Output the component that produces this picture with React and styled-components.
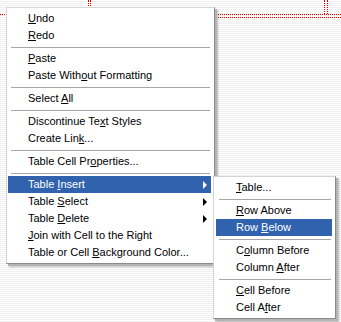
import React from 'react'
import styled, { createGlobalStyle } from 'styled-components'

const GlobalStyle = createGlobalStyle`
  html, body {
    margin: 0;
    padding: 0;
    background: #fff;
  }
`;

const mainItems = [
  { label: 'Undo', key: 0 },
  { label: 'Redo', key: 0 },
  { sep: true },
  { label: 'Paste', key: 0 },
  { label: 'Paste Without Formatting', key: 10 },
  { sep: true },
  { label: 'Select All', key: 7 },
  { sep: true },
  { label: 'Discontinue Text Styles', key: 14 },
  { label: 'Create Link...', key: 10 },
  { sep: true },
  { label: 'Table Cell Properties...', key: 13 },
  { sep: true },
  { label: 'Table Insert', key: 6, sub: true, active: true },
  { label: 'Table Select', key: 6, sub: true },
  { label: 'Table Delete', key: 6, sub: true },
  { label: 'Join with Cell to the Right', key: 0 },
  { label: 'Table or Cell Background Color...', key: 14 },
];

const subItems = [
  { label: 'Table...', key: 0 },
  { sep: true },
  { label: 'Row Above', key: 0 },
  { label: 'Row Below', key: 4, active: true },
  { sep: true },
  { label: 'Column Before', key: 1 },
  { label: 'Column After', key: 7 },
  { sep: true },
  { label: 'Cell Before', key: 0 },
  { label: 'Cell After', key: 6 },
];

function Label({ text, at }) {
  return (
    <Text>
      {text.slice(0, at)}
      <Key>{text[at]}</Key>
      {text.slice(at + 1)}
    </Text>
  )
}

function MenuList({ items, x, y, w, inset }) {
  return (
    <Menu $x={x} $y={y} $w={w} $inset={inset}>
      {items.map((it, i) =>
        it.sep ? (
          <Separator key={i} />
        ) : (
          <Item key={i} $active={it.active}>
            <Label text={it.label} at={it.key} />
            {it.sub && <Arrow $active={it.active} />}
          </Item>
        )
      )}
    </Menu>
  )
}

export default function App() {
  return (
    <>
      <GlobalStyle />
      <Canvas>
        <DotLine $top={14} $left={0} $width={341} />
        <DotLine $top={17} $left={216} $width={125} />
        <DotCol $left={88} $height={14} />
        <DotCol $left={90} $height={14} />
        <DotCol $left={324} $height={14} />
        <DotCol $left={327} $height={14} />
        <MenuList items={mainItems} x={6} y={7} w={209} inset={1} />
        <MenuList items={subItems} x={213} y={176} w={123} inset={2} />
      </Canvas>
    </>
  )
}

const Canvas = styled.div`
  position: relative;
  width: 341px;
  height: 322px;
  overflow: hidden;
  background: repeating-linear-gradient(
    to bottom,
    #ffffff 0px,
    #ffffff 1px,
    #efefef 1px,
    #efefef 2px
  );
  font-family: "Liberation Sans", Arial, sans-serif;
  font-size: 11px;
  color: #000;
`;

const DotLine = styled.div`
  position: absolute;
  top: ${p => p.$top}px;
  left: ${p => p.$left}px;
  width: ${p => p.$width}px;
  border-top: 1px dotted #e00000;
`;

const DotCol = styled.div`
  position: absolute;
  top: 0;
  left: ${p => p.$left}px;
  height: ${p => p.$height}px;
  border-left: 1px dotted #e00000;
`;

const Menu = styled.div`
  position: absolute;
  left: ${p => p.$x}px;
  top: ${p => p.$y}px;
  width: ${p => p.$w}px;
  box-sizing: border-box;
  display: flex;
  flex-direction: column;
  padding: 2px 3px 2px ${p => p.$inset}px;
  background: #fff;
  border: 1px solid;
  border-color: #d4d4d4 #8a8a8a #8a8a8a #d4d4d4;
  box-shadow: 2px 2px 0 #b4b4b4, 3px 3px 2px rgba(0, 0, 0, 0.25);
`;

const Item = styled.div`
  height: 17px;
  display: flex;
  align-items: center;
  padding-left: 20px;
  background: ${p => (p.$active ? '#3162ae' : 'transparent')};
  color: ${p => (p.$active ? '#fff' : '#000')};
  white-space: nowrap;
`;

const Text = styled.span`
  flex: 1;
  line-height: 17px;
`;

const Key = styled.span`
  text-decoration: underline;
  text-underline-offset: 1px;
`;

const Arrow = styled.span`
  width: 0;
  height: 0;
  margin-right: 4px;
  border-left: 4px solid ${p => (p.$active ? '#fff' : '#000')};
  border-top: 4px solid transparent;
  border-bottom: 4px solid transparent;
`;

const Separator = styled.div`
  height: 6px;
  margin: 0 1px 0 3px;
  display: flex;
  align-items: center;
  &::before {
    content: "";
    flex: 1;
    border-top: 1px solid #a6a6a6;
  }
`;
